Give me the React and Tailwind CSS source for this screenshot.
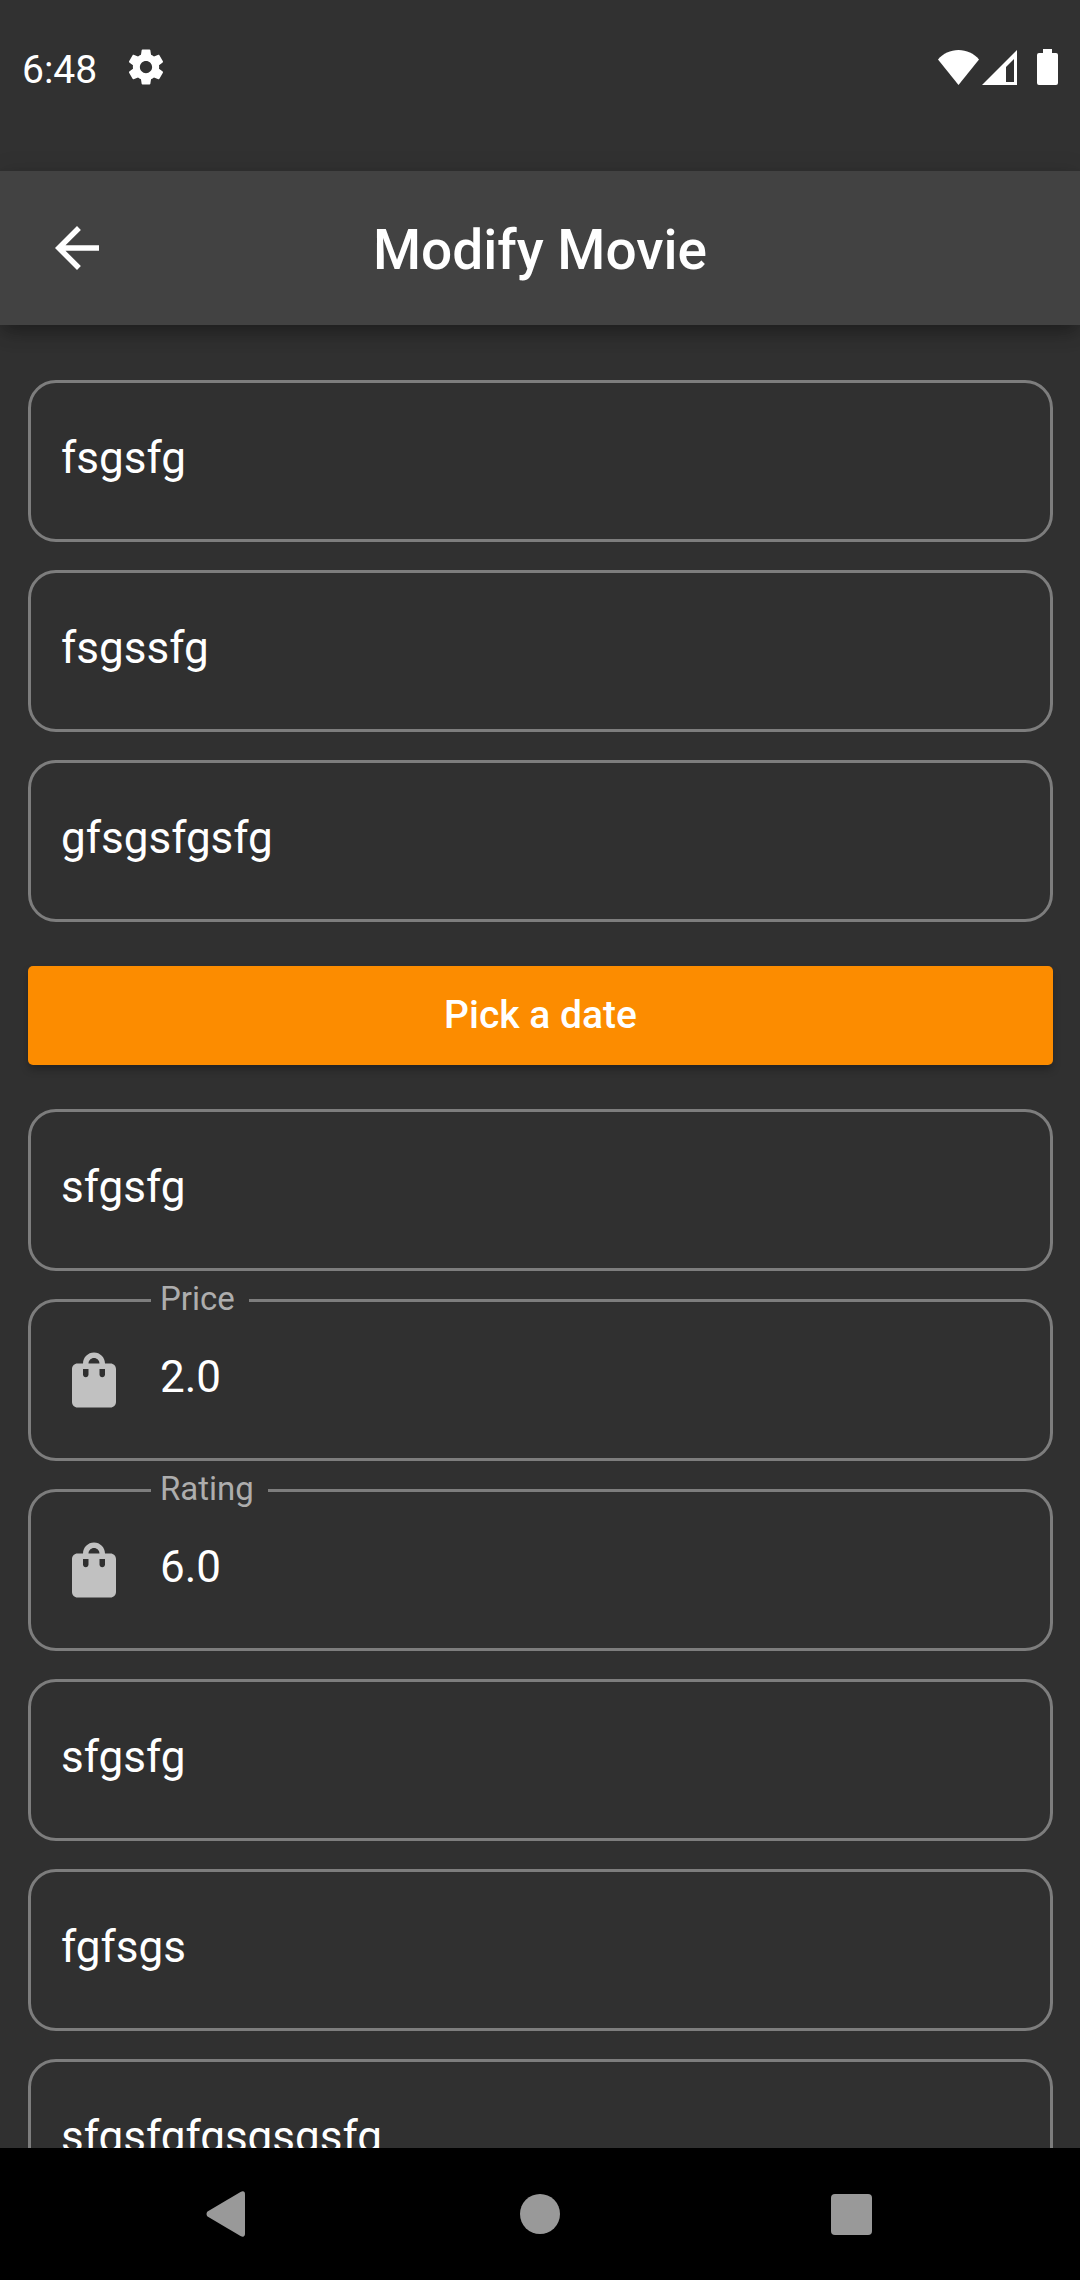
import React, { useId } from 'react';

const before = [
  { name: 'Title', value: 'fsgsfg' },
  { name: 'Director', value: 'fsgssfg' },
  { name: 'Summary', value: 'gfsgsfgsfg' },
];

const after = [
  { name: 'Genre', value: 'sfgsfg' },
  { name: 'Price', value: '2.0', labelled: true },
  { name: 'Rating', value: '6.0', labelled: true },
  { name: 'Country', value: 'sfgsfg' },
  { name: 'Language', value: 'fgfsgs' },
  { name: 'Image', value: 'sfgsfgfgsgsgsfg' },
];

function BagIcon() {
  return (
    <svg viewBox="0 0 24 24" className="size-[66px] shrink-0" fill="#c1c1c1" aria-hidden="true">
      <path d="M18 6h-2c0-2.21-1.79-4-4-4S8 3.79 8 6H6c-1.1 0-2 .9-2 2v12c0 1.1.9 2 2 2h12c1.1 0 2-.9 2-2V8c0-1.1-.9-2-2-2zm-8 4c0 .55-.45 1-1 1s-1-.45-1-1V8h2v2zm2-6c1.1 0 2 .9 2 2h-4c0-1.1.9-2 2-2zm4 6c0 .55-.45 1-1 1s-1-.45-1-1V8h2v2z" />
    </svg>
  );
}

function Field({ name, value, labelled }) {
  const id = useId();
  return (
    <div className="relative flex h-[162px] shrink-0 items-center rounded-[28px] border-3 border-[#7d7d7d]">
      {labelled && (
        <>
          <label
            htmlFor={id}
            className="absolute -top-[23px] left-[120px] bg-[#303030] pr-[14px] pl-[9px] text-[33px] leading-[40px] text-[#adadad]"
          >
            {name}
          </label>
          <span className="w-[129px] shrink-0 pl-[30px]">
            <BagIcon />
          </span>
        </>
      )}
      <input
        id={id}
        type="text"
        aria-label={labelled ? undefined : name}
        defaultValue={value}
        className={
          'h-full min-w-0 flex-1 bg-transparent pr-[30px] pb-[6px] text-[44px] text-white outline-none ' +
          (labelled ? 'pl-0' : 'pl-[30px]')
        }
      />
    </div>
  );
}

function StatusBar() {
  return (
    <div className="flex h-[171px] shrink-0 items-start justify-between bg-[#313131] pt-[42px] pr-[22px] pl-[22px] text-white">
      <div className="flex items-start gap-[28px]">
        <span className="text-[39px] leading-[56px]">6:48</span>
        <svg viewBox="0 0 24 24" className="mt-[4px] size-[42px]" fill="currentColor" aria-hidden="true">
          <path d="M19.43 12.98c.04-.32.07-.64.07-.98s-.03-.66-.07-.98l2.11-1.65c.19-.15.24-.42.12-.64l-2-3.46c-.12-.22-.39-.3-.61-.22l-2.49 1c-.52-.4-1.08-.73-1.69-.98l-.38-2.65C14.46 2.18 14.25 2 14 2h-4c-.25 0-.46.18-.49.42l-.38 2.65c-.61.25-1.17.59-1.69.98l-2.49-1c-.23-.09-.49 0-.61.22l-2 3.46c-.13.22-.07.49.12.64l2.11 1.65c-.04.32-.07.65-.07.98s.03.66.07.98l-2.11 1.65c-.19.15-.24.42-.12.64l2 3.46c.12.22.39.3.61.22l2.49-1c.52.4 1.08.73 1.69.98l.38 2.65c.03.24.24.42.49.42h4c.25 0 .46-.18.49-.42l.38-2.65c.61-.25 1.17-.59 1.69-.98l2.49 1c.23.09.49 0 .61-.22l2-3.46c.12-.22.07-.49-.12-.64l-2.11-1.65zM12 15.500c-1.930 0-3.500-1.570-3.500-3.500s1.570-3.500 3.500-3.500 3.500 1.570 3.500 3.500-1.570 3.500-3.500 3.500z" />
        </svg>
      </div>
      <div className="flex h-[50px] items-center" aria-hidden="true">
        <svg viewBox="0 0 41 35" className="mr-[3px] h-[35px] w-[41px]" fill="currentColor">
          <path d="M0 9.5C5 3.500 12.500 0 20.500 0S36 3.500 41 9.500L20.500 35z" />
        </svg>
        <svg viewBox="0 0 35 35" className="mr-[20px] size-[35px]" fill="currentColor" fillRule="evenodd">
          <path d="M35 0v35H0zM32 9l-8 8v15h8z" />
        </svg>
        <svg viewBox="0 0 21 36" className="h-[36px] w-[21px]" fill="currentColor">
          <path d="M6 0h9v4h4a2 2 0 0 1 2 2v28a2 2 0 0 1-2 2H2a2 2 0 0 1-2-2V6a2 2 0 0 1 2-2h4z" />
        </svg>
      </div>
    </div>
  );
}

function NavBar() {
  return (
    <nav aria-label="System" className="flex h-[132px] shrink-0 items-center bg-black px-[73px] text-[#999999]">
      <button type="button" aria-label="Back" className="flex h-full flex-1 items-center justify-center">
        <svg viewBox="0 0 46 46" className="size-[46px]" fill="currentColor">
          <path d="M1.500 20.500 34.500 .9Q39 -1 39 3.500V42.500Q39 47 34.500 45.100L1.500 25.500Q-.5 23 1.500 20.500z" />
        </svg>
      </button>
      <button type="button" aria-label="Home" className="flex h-full flex-1 items-center justify-center">
        <span className="size-[40px] rounded-full bg-[#999999]" />
      </button>
      <button type="button" aria-label="Recent apps" className="flex h-full flex-1 items-center justify-center">
        <span className="size-[41px] rounded-[4px] bg-[#999999]" />
      </button>
    </nav>
  );
}

export default function App() {
  return (
    <div className="flex h-screen flex-col overflow-hidden bg-[#303030] font-['Roboto',sans-serif] text-white">
      <StatusBar />
      <header className="z-10 grid h-[154px] shrink-0 grid-cols-[154px_1fr_154px] items-center bg-[#424242] shadow-[0_10px_16px_-4px_rgba(0,0,0,0.3),0_4px_24px_0_rgba(0,0,0,0.15)]">
        <button type="button" aria-label="Back" className="flex h-full items-center justify-center">
          <svg viewBox="0 0 24 24" className="size-[66px]" fill="currentColor">
            <path d="M20 11H7.830l5.590-5.590L12 4l-8 8 8 8 1.410-1.410L7.830 13H20v-2z" />
          </svg>
        </button>
        <h1 className="pt-[3px] text-center text-[55px] leading-[64px] font-medium">Modify Movie</h1>
      </header>
      <main className="min-h-0 flex-1 overflow-hidden">
        <form className="flex flex-col gap-[28px] pt-[55px] pr-[27px] pl-[28px]">
          {before.map((f) => (
            <Field key={f.name} {...f} />
          ))}
          <button
            type="button"
            className="my-4 h-[99px] shrink-0 rounded-[5px] bg-[#fc8c00] text-[39px] font-medium shadow-[0_5px_8px_-1px_rgba(0,0,0,0.3)]"
          >
            Pick a date
          </button>
          {after.map((f) => (
            <Field key={f.name} {...f} />
          ))}
        </form>
      </main>
      <NavBar />
    </div>
  );
}
